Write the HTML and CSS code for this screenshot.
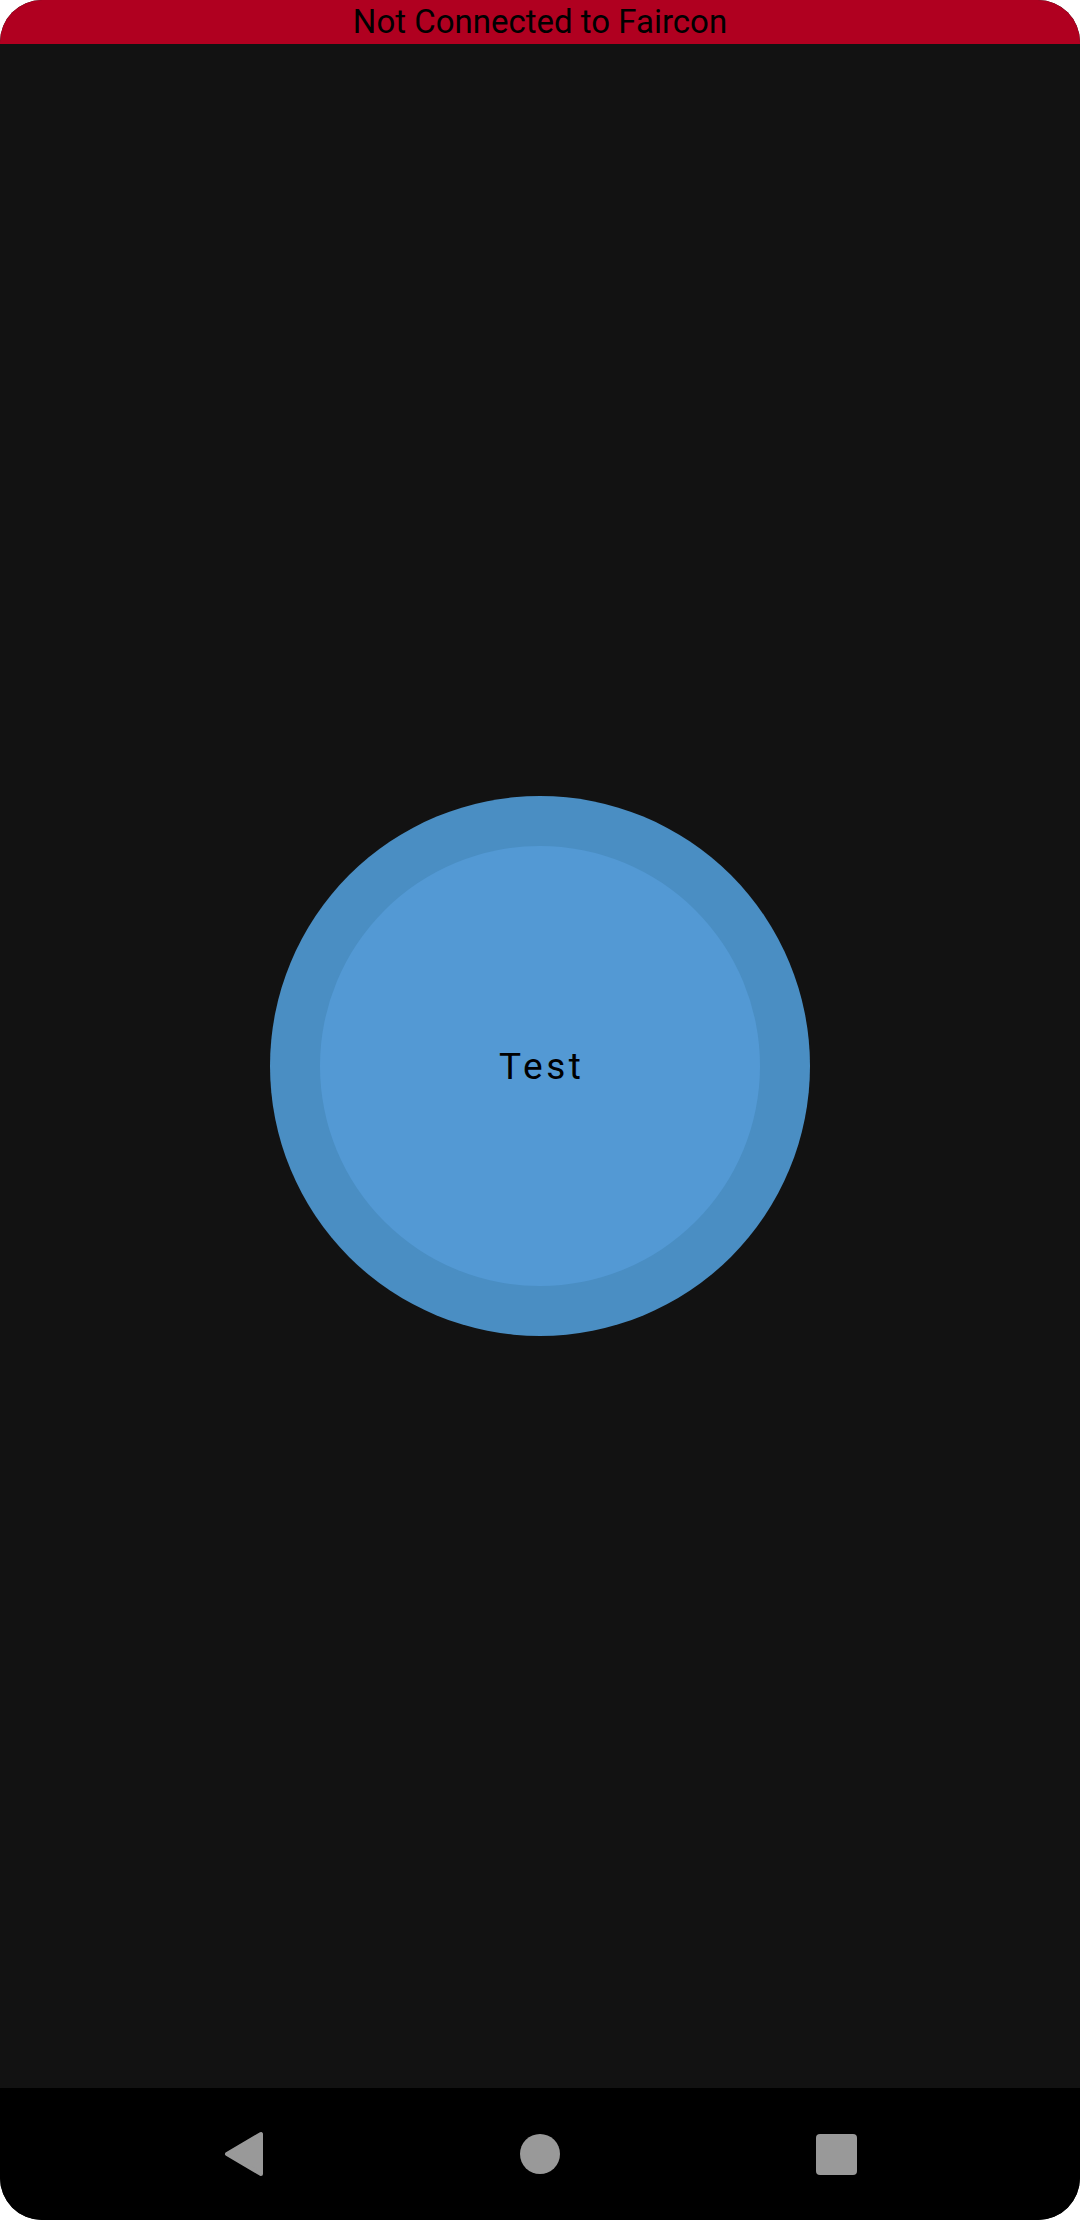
FILE: index.html
```html
<!DOCTYPE html>
<html>
<head>
<meta charset="utf-8">
<link rel="stylesheet" href="styles.css">
</head>
<body>
<div class="screen">
  <div class="status">Not Connected to Faircon</div>
  <main class="content">
    <div class="ring">
      <div class="button">Test</div>
    </div>
  </main>
  <nav class="navbar">
    <svg class="back" width="40" height="46" viewBox="0 0 40 46"><polygon points="3,23 37,3 37,43" fill="#999" stroke="#999" stroke-width="4" stroke-linejoin="round"/></svg>
    <div class="home"></div>
    <div class="recents"></div>
  </nav>
</div>
</body>
</html>
```
FILE: styles.css
```css
html, body {
  margin: 0;
  padding: 0;
  background: #ffffff;
}
.screen {
  width: 1080px;
  height: 2220px;
  border-radius: 42px;
  overflow: hidden;
  display: flex;
  flex-direction: column;
  background: #121212;
  font-family: Roboto, "Noto Sans", sans-serif;
}
.status {
  height: 44px;
  background: #b00020;
  color: #000;
  font-size: 33px;
  line-height: 44px;
  text-align: center;
}
.content {
  flex: 1;
  display: flex;
  align-items: center;
  justify-content: center;
}
.ring {
  width: 540px;
  height: 540px;
  border-radius: 50%;
  background: #4a8ec3;
  display: flex;
  align-items: center;
  justify-content: center;
}
.button {
  width: 440px;
  height: 440px;
  border-radius: 50%;
  background: #5399d4;
  display: flex;
  align-items: center;
  justify-content: center;
  color: #000;
  font-size: 37px;
  letter-spacing: 3.6px;
  text-indent: 3.6px;
}
.navbar {
  height: 132px;
  background: #000;
  display: flex;
  align-items: center;
  justify-content: center;
  gap: 256px;
}
.back {
  display: block;
}
.home {
  width: 40px;
  height: 40px;
  border-radius: 50%;
  background: #999;
}
.recents {
  width: 41px;
  height: 41px;
  border-radius: 4px;
  background: #999;
}
```
